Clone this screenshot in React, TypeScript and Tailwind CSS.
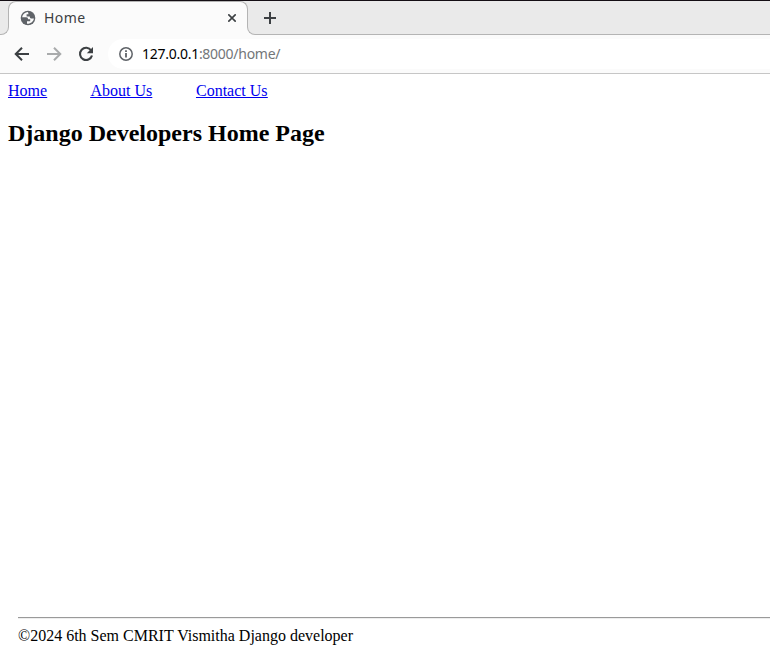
import React from "react";

function TabStrip() {
  return (
    <div className="h-[34px] bg-[#eaeaea] font-['Noto_Sans',sans-serif] text-[#3c4043]">
      <div className="flex h-[25px]">
        <div className="w-2 shrink-0" />
        <div className="flex w-60 shrink-0 items-start rounded-t-[8px] border border-b-0 border-[#b4b4b4] bg-[#fbfbfb] pl-[11px] pt-[7px]">
          <svg className="mt-px size-4 shrink-0" viewBox="0 0 16 16">
            <circle cx="8" cy="8" r="7.3" fill="#5f6368" />
            <path
              d="M8 2.1C5.2 2.3 2.7 4.2 2.1 7.3H6.2C7.7 7.3 8 8.1 8 9.3H10.2V11.2H7V13.8C10.8 14 13.6 11.3 13.9 8.5H11.1C10 8.5 9.8 7.7 9.8 6.6H6.6V4.2H8.5Z"
              fill="#fbfbfb"
            />
          </svg>
          <span className="ml-2 w-[180px] text-[14px] leading-[18px] tracking-[0.4px]">Home</span>
          <svg className="ml-1 mt-[5px] size-2 shrink-0" viewBox="0 0 8 8" stroke="#3c4043" strokeWidth="1.6">
            <path d="M.3.3l7.4 7.4M7.7.3L.3 7.7" />
          </svg>
        </div>
        <svg className="ml-4 mt-[11px] size-3 shrink-0" viewBox="0 0 12 12" stroke="#3c4043" strokeWidth="2">
          <path d="M6 0v12M0 6h12" />
        </svg>
      </div>
      <div className="flex h-[9px] bg-[#fbfbfb]">
        <div className="w-[9px] shrink-0 rounded-br-[8px] border-b border-r border-[#b4b4b4] bg-[#eaeaea]" />
        <div className="w-[238px] shrink-0" />
        <div className="grow rounded-bl-[8px] border-b border-l border-[#b4b4b4] bg-[#eaeaea]" />
      </div>
    </div>
  );
}

function Toolbar() {
  return (
    <div className="flex h-[39px] items-start border-b border-[#c6c6c6] bg-[#fbfbfb] pl-[14px]">
      <svg className="mt-3 h-[14px] w-4 shrink-0" viewBox="0 0 16 14" fill="none" stroke="#3c4043" strokeWidth="2">
        <path d="M15 7H2M8 .7L1.7 7 8 13.3" />
      </svg>
      <svg className="ml-4 mt-3 h-[14px] w-4 shrink-0" viewBox="0 0 16 14" fill="none" stroke="#a9abac" strokeWidth="2">
        <path d="M1 7h13M8 .7L14.3 7 8 13.3" />
      </svg>
      <svg className="ml-4 mt-[11px] size-4 shrink-0" viewBox="0 0 16 16" fill="none">
        <path d="M13.2 4.5A6.1 6.1 0 1 0 14 9.5" stroke="#3c4043" strokeWidth="2.1" />
        <path d="M15 1v6.2H8.8z" fill="#3c4043" />
      </svg>
      <div className="ml-[14px] mt-1 flex h-[30px] grow items-center rounded-l-full bg-white pl-[11px]">
        <svg className="size-[14px] shrink-0" viewBox="0 0 14 14" fill="none" stroke="#5f6368" strokeWidth="1.5">
          <circle cx="7" cy="7" r="6.2" />
          <path d="M7 6v4.5M7 3.3v1.7" strokeWidth="1.8" />
        </svg>
        <span className="ml-[9px] font-['Noto_Sans',sans-serif] text-[14px] leading-5 tracking-[-0.27px] text-[#737679]">
          <span className="text-black">127.0.0.1</span>:8000/home/
        </span>
      </div>
    </div>
  );
}

export default function App() {
  return (
    <div className="flex h-[659px] w-[770px] flex-col overflow-hidden bg-white text-black">
      <div className="h-px shrink-0 bg-[#140e14]" />
      <TabStrip />
      <Toolbar />
      <main className="flex grow flex-col font-['Liberation_Serif',serif] text-[16px] leading-[18px]">
        <nav className="flex pl-2 pt-2 text-[#0000ee] underline">
          <a href="#" className="w-[82.4px]">Home</a>
          <a href="#" className="w-[105.6px]">About Us</a>
          <a href="#">Contact Us</a>
        </nav>
        <h2 className="ml-2 mt-5 text-[24px] font-bold leading-[27px]">Django Developers Home Page</h2>
        <footer className="ml-[18px] mt-auto h-[42px]">
          <hr className="h-[2px] border-b border-t border-b-[#eeeeee] border-t-[#9a9a9a]" />
          <p className="mt-2">©2024 6th Sem CMRIT Vismitha Django developer</p>
        </footer>
      </main>
    </div>
  );
}
